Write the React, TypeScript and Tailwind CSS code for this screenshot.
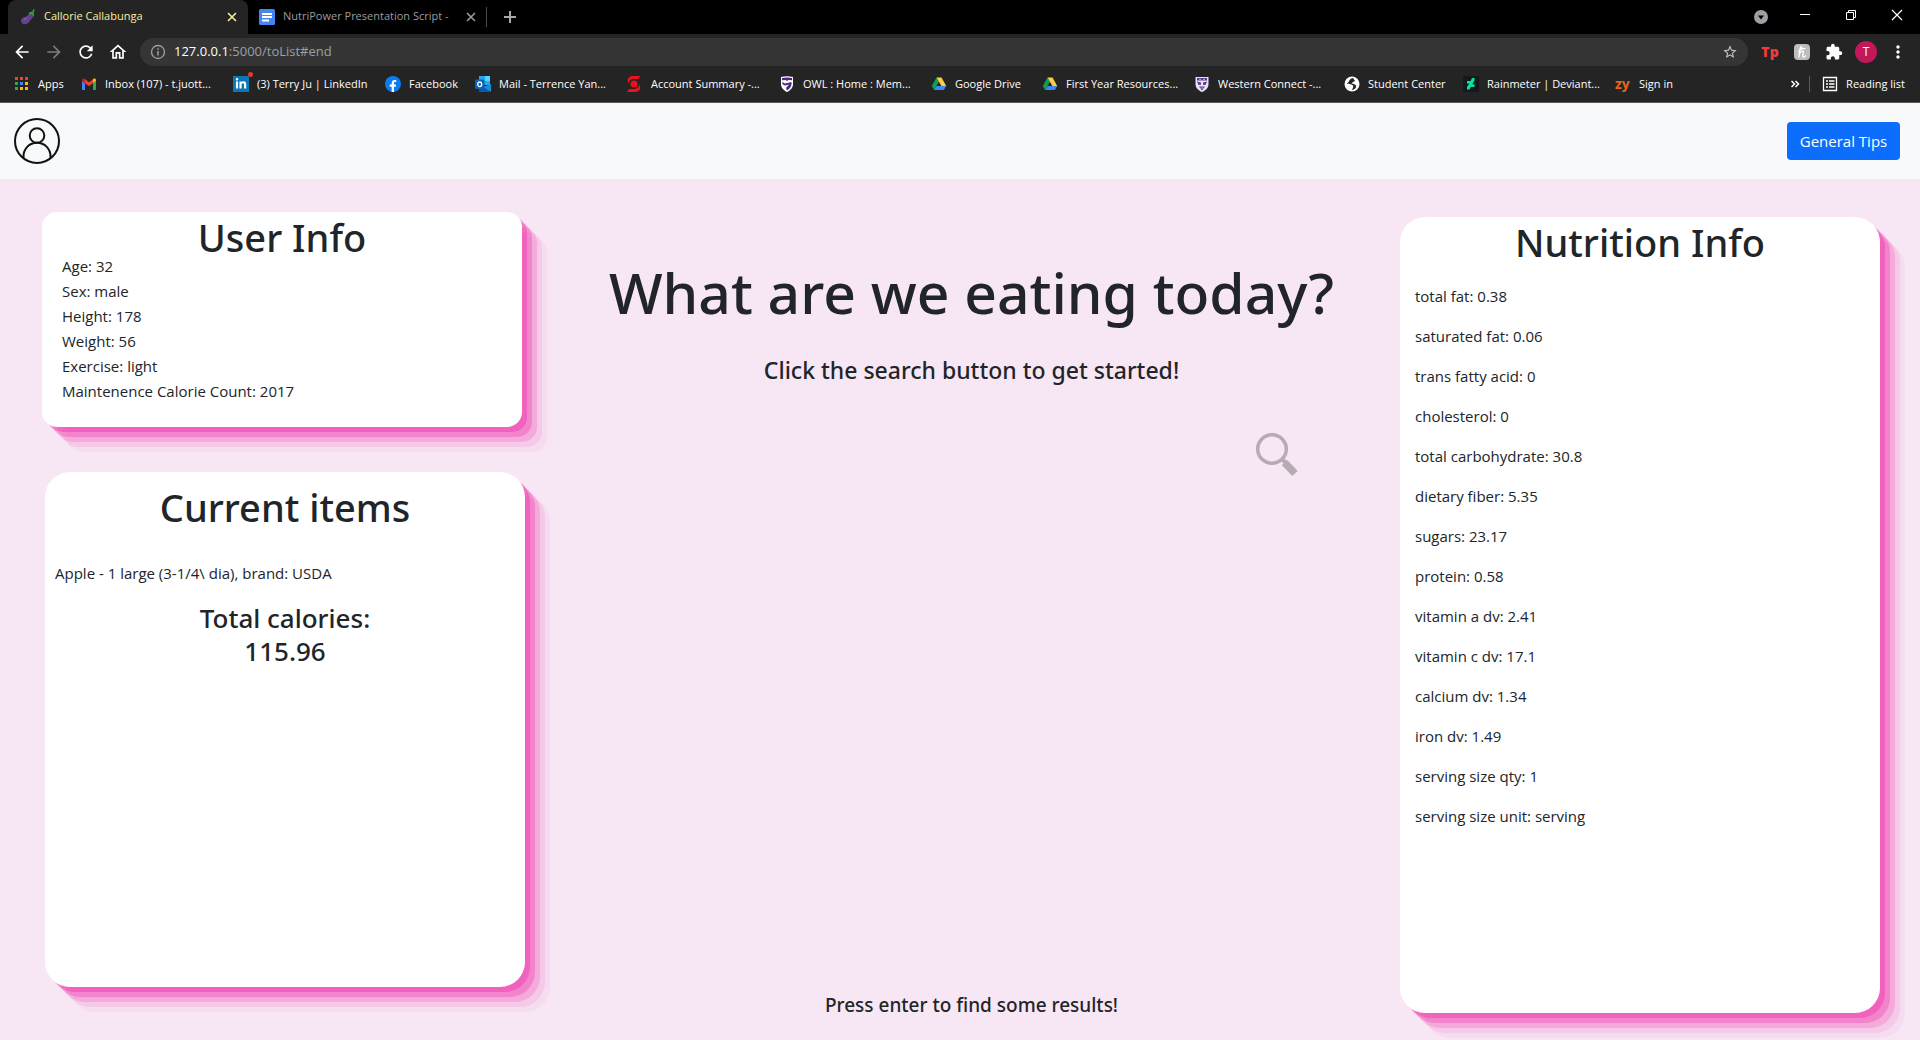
import React from 'react';
import { FaFacebookF, FaLinkedinIn } from 'react-icons/fa';
import { MdArrowBack, MdArrowForward, MdRefresh, MdOutlineHome, MdStarBorder, MdExtension, MdMoreVert } from 'react-icons/md';

const userInfo = [
  { label: 'Age', value: '32' },
  { label: 'Sex', value: 'male' },
  { label: 'Height', value: '178' },
  { label: 'Weight', value: '56' },
  { label: 'Exercise', value: 'light' },
  { label: 'Maintenence Calorie Count', value: '2017' },
];

const nutritionInfo = [
  { label: 'total fat', value: '0.38' },
  { label: 'saturated fat', value: '0.06' },
  { label: 'trans fatty acid', value: '0' },
  { label: 'cholesterol', value: '0' },
  { label: 'total carbohydrate', value: '30.8' },
  { label: 'dietary fiber', value: '5.35' },
  { label: 'sugars', value: '23.17' },
  { label: 'protein', value: '0.58' },
  { label: 'vitamin a dv', value: '2.41' },
  { label: 'vitamin c dv', value: '17.1' },
  { label: 'calcium dv', value: '1.34' },
  { label: 'iron dv', value: '1.49' },
  { label: 'serving size qty', value: '1' },
  { label: 'serving size unit', value: 'serving' },
];

const AppsIcon = () => (
  <svg viewBox="0 0 16 16" className="w-4 h-4 shrink-0">
    <path fill="#ea4335" d="M1 1h3v3H1zM6 1h3v3H6zM11 1h3v3h-3z" />
    <path fill="#34a853" d="M1 6h3v3H1z" />
    <path fill="#4285f4" d="M6 6h3v3H6z" />
    <path fill="#fbbc04" d="M11 6h3v3h-3zM6 11h3v3H6zM11 11h3v3h-3z" />
    <path fill="#34a853" d="M1 11h3v3H1z" />
  </svg>
);

const GmailIcon = () => (
  <svg viewBox="0 0 16 16" className="w-4 h-4 shrink-0">
    <path fill="#4285f4" d="M1 5v8c0 .6.4 1 1 1h2V7.200z" />
    <path fill="#34a853" d="M12 14h2c.6 0 1-.4 1-1V5l-3 2.200z" />
    <path fill="#fbbc04" d="M12 3.500v3.800l3-2.300V4c0-1.500-1.600-2-2.500-1.300z" />
    <path fill="#ea4335" d="M4 7.300V3.300l4 3 4-3v4l-4 3z" />
    <path fill="#c5221f" d="M1 4v1l3 2.300V3.300l-.6-.5C2.400 2 1 2.700 1 4z" />
  </svg>
);

const LinkedInIcon = () => (
  <span className="relative flex items-center justify-center w-4 h-4 shrink-0 bg-[#0a78b8]">
    <FaLinkedinIn className="w-3 h-3 text-white" />
    <span className="absolute -top-1 -right-1 w-[5px] h-[5px] rounded-full bg-[#e8372c]" />
  </span>
);

const FacebookIcon = () => (
  <span className="flex items-end justify-center w-4 h-4 shrink-0 rounded-full bg-[#0b7cf0]">
    <FaFacebookF className="w-3 h-3 text-white" />
  </span>
);

const OutlookIcon = () => (
  <svg viewBox="0 0 16 16" className="w-4 h-4 shrink-0">
    <path fill="#28a8ea" d="M4 0h11v9H4z" />
    <path fill="#50d9ff" d="M10 0h5v5h-5z" />
    <path fill="#0f5aa8" d="M4 8l6 3 6-3v7c0 .6-.4 1-1 1H5c-.6 0-1-.4-1-1z" />
    <path fill="#1490df" d="M16 8v7.500L8 11z" />
    <rect fill="#0a63b8" y="3.500" width="9.500" height="9.500" rx=".8" />
    <ellipse cx="4.700" cy="8.300" rx="2" ry="2.300" fill="none" stroke="#fff" strokeWidth="1.300" />
  </svg>
);

const ScotiaIcon = () => (
  <svg viewBox="0 0 16 16" className="w-4 h-4 shrink-0" fill="#ec111a">
    <circle cx="7" cy="8" r="3.500" />
    <path d="M13.500 0H6C2.500 0 .5 2.300.8 5l.7 3C2 4.800 4 3 7 3h4.500zM0 16h8c3.500 0 5.500-2.300 5.200-5l-.7-3c-.5 3.200-2.500 5-5.500 5H2z" />
  </svg>
);

const OwlIcon = () => (
  <svg viewBox="0 0 16 16" className="w-4 h-4 shrink-0">
    <path fill="#fff" d="M2 1c4-1 8-1 12 0v7c0 4-3 6.500-6 8-3-1.500-6-4-6-8z" />
    <path fill="#4f2683" d="M3 2c3.500-.8 6.500-.8 10 0v2.200L9.500 4 8 5 6.500 4 3 4.200zM3 6l3 1.500L12.500 6c.5 4-1.500 6.500-4.500 8.500L7 12l3-3.500-3.500 1C5 9.500 3 8.500 3 6z" />
  </svg>
);

const DriveIcon = () => (
  <svg viewBox="0 0 16 16" className="w-4 h-4 shrink-0">
    <path fill="#0f9d58" d="M5.500 1.500L.8 10l2.400 4L8 5.700z" />
    <path fill="#ffcd40" d="M5.500 1.500h5L15.200 10h-4.800z" />
    <path fill="#4285f4" d="M5.600 10h9.600l-2.300 4H3.200z" />
  </svg>
);

const WesternIcon = () => (
  <svg viewBox="0 0 16 16" className="w-4 h-4 shrink-0">
    <path fill="#e9e2f3" d="M1.500 1h13v7c0 4-3 6.500-6.500 8-3.500-1.500-6.500-4-6.500-8z" />
    <path fill="#5b3592" d="M3 2h10v2.500H3zM3 5.500l4 1v2.300L4.500 9zM13 5.500l-4 1v2.300l2.500.2zM5 10.500h6L8 14.500z" />
    <path stroke="#e9e2f3" strokeWidth=".7" d="M5 3.300h2M9 3.300h2M6.500 12h3" />
  </svg>
);

const GlobeIcon = () => (
  <svg viewBox="0 0 16 16" className="w-4 h-4 shrink-0">
    <circle cx="8" cy="8" r="7.500" fill="#fff" />
    <path fill="#242424" d="M9 2C6.500 2.500 5 4 5 5.500L3 7.500c1 .8 3.500.4 4.500 1 1.300.8 2.500 1.500 1.500 3L8 14c3.500-.5 4.500-3 4-4.500L10 8 7.500 7.500 9 6l2-1z" />
  </svg>
);

const DeviantIcon = () => (
  <svg viewBox="0 0 16 16" className="w-4 h-4 shrink-0">
    <path fill="#131a1f" d="M0 0h16v16H0z" />
    <path fill="#06e59b" d="M11.500 2v2.500L9.300 8.300h2.200v2.700H7.800l-1.300 2.500H4V11l2.200-3.500H4V5h3.700L9 2z" />
  </svg>
);

const ZyIcon = () => <span className="w-4 shrink-0 text-sm leading-4 font-bold text-[#e8641b]">zy</span>;

const bookmarks = [
  { name: 'Apps', icon: AppsIcon, width: 'w-[67px]' },
  { name: 'Inbox (107) - t.juott...', icon: GmailIcon, width: 'w-[152px]' },
  { name: '(3) Terry Ju | LinkedIn', icon: LinkedInIcon, width: 'w-[152px]' },
  { name: 'Facebook', icon: FacebookIcon, width: 'w-[90px]' },
  { name: 'Mail - Terrence Yan...', icon: OutlookIcon, width: 'w-[152px]' },
  { name: 'Account Summary -...', icon: ScotiaIcon, width: 'w-[152px]' },
  { name: 'OWL : Home : Mem...', icon: OwlIcon, width: 'w-[152px]' },
  { name: 'Google Drive', icon: DriveIcon, width: 'w-[111px]' },
  { name: 'First Year Resources...', icon: DriveIcon, width: 'w-[152px]' },
  { name: 'Western Connect -...', icon: WesternIcon, width: 'w-[150px]' },
  { name: 'Student Center', icon: GlobeIcon, width: 'w-[119px]' },
  { name: 'Rainmeter | Deviant...', icon: DeviantIcon, width: 'w-[152px]' },
  { name: 'Sign in', icon: ZyIcon, width: 'w-[90px]' },
];

const TabStrip: React.FC = () => (
  <div className="flex items-end h-[34px] pl-2 bg-black text-[11px]">
    <div className="flex items-center w-[240px] h-[34px] pb-1 pl-3 pr-[10px] pt-[3px] rounded-t-lg bg-[#242424] text-[#f7ef9c]">
      <svg viewBox="0 0 16 16" className="w-4 h-4 mr-2 shrink-0">
        <path fill="#64418c" d="M11 4.500c2 1.500 2.500 3 1.500 4.500-1 1.400-2 1.500-3 3.500-1.300 2.500-4.500 3.500-6.700 2.300C.5 13.500.5 10.500 2.500 9c2-1.300 3.500-.8 5-2.500C8.500 5.500 9.500 4 11 4.500z" />
        <path fill="#8a63b5" d="M3.500 10c1.500-1 3-.7 4.500-2-.5 1.500-2.500 2-4 3.500z" />
        <path fill="#3b9a45" d="M8.500 5c.5-1.500 2-2.500 3.500-2L13.500 0l1.300.7-1.300 3c1 1.300.8 3-.3 4.300-.2-1.500-1-2.500-2-2.700-1 .2-1.800.2-2.700-.3z" />
      </svg>
      <span className="flex-1 whitespace-nowrap">Callorie Callabunga</span>
      <button type="button" aria-label="Close tab">
        <svg viewBox="0 0 12 12" className="w-3 h-3" stroke="currentColor" strokeWidth="1.600"><path d="M2 2l8 8M10 2l-8 8" /></svg>
      </button>
    </div>
    <div className="flex items-center w-[238px] h-[34px] pb-1 pl-[11px] pr-[9px] pt-[3px] text-[#989ba0]">
      <svg viewBox="0 0 16 16" className="w-4 h-4 mr-2 shrink-0">
        <rect width="16" height="16" rx="1.500" fill="#4285f4" />
        <path fill="#fff" d="M3 4h10v2H3zM3 7h10v2H3zM3 10.500h7v2H3z" />
      </svg>
      <span className="flex-1 whitespace-nowrap">NutriPower Presentation Script -</span>
      <button type="button" aria-label="Close tab">
        <svg viewBox="0 0 12 12" className="w-3 h-3" stroke="currentColor" strokeWidth="1.600"><path d="M2 2l8 8M10 2l-8 8" /></svg>
      </button>
    </div>
    <div className="flex items-center flex-1 h-[34px]">
      <span className="w-px h-5 bg-[#4a4a4a]" />
      <button type="button" aria-label="New tab" className="ml-4 text-[#a5a8ad]">
        <svg viewBox="0 0 14 14" className="w-[14px] h-[14px]" stroke="currentColor" strokeWidth="2"><path d="M7 1v12M1 7h12" /></svg>
      </button>
    </div>
    <div className="flex items-center h-[34px] pb-1 pr-[17px] text-white">
      <button type="button" aria-label="Search tabs" className="pt-1 mr-[31px]">
        <svg viewBox="0 0 14 14" className="w-[14px] h-[14px]"><circle cx="7" cy="7" r="7" fill="#9aa0a6" /><path fill="#000" d="M4 5.500h6L7 9.500z" /></svg>
      </button>
      <button type="button" aria-label="Minimize" className="mr-[34px]">
        <svg viewBox="0 0 12 12" className="w-3 h-3"><path fill="currentColor" d="M1 5h10v1H1z" /></svg>
      </button>
      <button type="button" aria-label="Restore" className="mr-[34px]">
        <svg viewBox="0 0 12 12" className="w-3 h-3" fill="none" stroke="currentColor"><path d="M1.500 3.500h7v7h-7zM3.500 3.500v-2h7v7h-2" /></svg>
      </button>
      <button type="button" aria-label="Close">
        <svg viewBox="0 0 12 12" className="w-3 h-3" stroke="currentColor" strokeWidth="1.200"><path d="M1 1l10 10M11 1L1 11" /></svg>
      </button>
    </div>
  </div>
);

const Toolbar: React.FC = () => (
  <div className="flex items-center h-9 pl-3 pr-[6px] text-white">
    <div className="flex items-center gap-3">
      <button type="button" aria-label="Back"><MdArrowBack className="w-5 h-5" /></button>
      <button type="button" aria-label="Forward"><MdArrowForward className="w-5 h-5 text-[#7b7b7b]" /></button>
      <button type="button" aria-label="Reload"><MdRefresh className="w-5 h-5" /></button>
      <button type="button" aria-label="Home"><MdOutlineHome className="w-5 h-5" /></button>
    </div>
    <div className="flex items-center flex-1 h-7 ml-3 px-[10px] rounded-full bg-[#353535]">
      <svg viewBox="0 0 16 16" className="w-4 h-4 mr-2" fill="none" stroke="#9aa0a6" strokeWidth="1.300">
        <circle cx="8" cy="8" r="6.500" />
        <path d="M8 7v4.500M8 4.300v1.400" strokeWidth="1.500" />
      </svg>
      <span className="flex-1 text-[13px] text-[#9aa0a6]"><span className="text-white">127.0.0.1</span>:5000/toList#end</span>
      <button type="button" aria-label="Bookmark this page"><MdStarBorder className="w-4 h-4 text-[#c4c7c5]" /></button>
    </div>
    <div className="grid grid-cols-5 items-center justify-items-center w-40 ml-[6px]">
      <span className="text-sm leading-4 font-extrabold text-[#f23b3b]">Tp</span>
      <span className="w-4 h-4 rounded-sm bg-[#bdbdbd] text-white">
        <svg viewBox="0 0 16 16" className="w-4 h-4" fill="none" stroke="currentColor" strokeWidth="1.300" strokeLinecap="round">
          <path d="M4.500 7C7 6 8.500 3.500 7.500 2.700S5.500 6 5 13M5 10.500C6 8 8.500 6.500 9.300 7.500s-1 3-.5 4.700 2 .8 2.700-.5M8 5l3-.7" />
        </svg>
      </span>
      <button type="button" aria-label="Extensions"><MdExtension className="w-[18px] h-[18px]" /></button>
      <button type="button" className="w-[22px] h-[22px] rounded-full bg-[#c2185b] text-xs">T</button>
      <button type="button" aria-label="Menu"><MdMoreVert className="w-5 h-5" /></button>
    </div>
  </div>
);

const BookmarksBar: React.FC = () => (
  <div className="flex items-center h-[33px] pl-[14px] pr-[15px] pb-1 text-[11px] text-white border-b border-[#5a5a5a]">
    {bookmarks.map(({ name, icon: Icon, width }) => (
      <a key={name} href="#bookmark" className={`flex items-center gap-2 shrink-0 whitespace-nowrap ${width}`}>
        <Icon />
        {name}
      </a>
    ))}
    <div className="flex items-center ml-auto">
      <button type="button" aria-label="More bookmarks">
        <svg viewBox="0 0 10 10" className="w-[10px] h-[10px]" fill="none" stroke="currentColor" strokeWidth="1.500"><path d="M1.500 2l3 3-3 3M5.500 2l3 3-3 3" /></svg>
      </button>
      <span className="w-px h-4 ml-[9px] mr-3 bg-[#5a5a5a]" />
      <button type="button" className="flex items-center gap-2 whitespace-nowrap">
        <svg viewBox="0 0 16 16" className="w-4 h-4" fill="none" stroke="currentColor" strokeWidth="1.300">
          <path d="M1.500 1.500h13v13h-13zM4 5h2M7 5h5.500M4 8h2M7 8h5.500M4 11h2M7 11h5.500" />
        </svg>
        Reading list
      </button>
    </div>
  </div>
);

const App: React.FC = () => {
  const shadow =
    'shadow-[5px_5px_0_rgba(240,46,170,0.4),10px_10px_0_rgba(240,46,170,0.3),15px_15px_0_rgba(240,46,170,0.2),20px_20px_0_rgba(240,46,170,0.1),25px_25px_0_rgba(240,46,170,0.05)]';
  const heading = "font-['Noto_Sans',sans-serif] font-medium text-center";

  return (
    <div className="flex flex-col min-h-screen bg-[#f7e6f4] font-['Open_Sans',sans-serif] text-[15px] text-[#212529]">
      {/* Browser */}
      <header className="bg-[#242424]">
        <TabStrip />
        <Toolbar />
        <BookmarksBar />
      </header>

      {/* Navbar */}
      <nav className="flex items-center justify-between h-[76px] pl-[14px] pr-5 bg-[#f8f9fa]">
        <a href="#profile" aria-label="Profile">
          <svg viewBox="0 0 46 46" className="w-[46px] h-[46px]" fill="none" stroke="#111" strokeWidth="2">
            <circle cx="23" cy="23" r="22" />
            <circle cx="23" cy="17.500" r="7.300" />
            <path d="M9.500 40v-1.500c0-8 6-13.700 13.500-13.700s13.500 5.700 13.500 13.700V40" />
          </svg>
        </a>
        <button type="button" className="w-[113px] h-[38px] rounded bg-[#0d6efd] text-white">General Tips</button>
      </nav>

      <main className="flex flex-1">
        <aside className="pt-[33px]">
          {/* User Info */}
          <section className={`w-[25vw] min-h-[215px] ml-[42px] px-5 pt-2 rounded-[15px] bg-white ${shadow}`}>
            <h1 className={`text-[38px] leading-[34px] ${heading}`}>User Info</h1>
            <ul className="leading-[25px]">
              {userInfo.map((item) => (
                <li key={item.label}>{item.label}: {item.value}</li>
              ))}
            </ul>
          </section>

          {/* Current items */}
          <section className={`w-[25vw] min-h-[515px] mt-[45px] ml-[45px] px-[10px] pt-[11px] rounded-[25px] bg-white ${shadow}`}>
            <h1 className={`text-[38px] leading-[48px] ${heading}`}>Current items</h1>
            <p className="mt-[30px] leading-6">Apple - 1 large (3-1/4\ dia), brand: USDA</p>
            <h3 className={`mt-[17px] text-[26px] leading-[33px] ${heading}`}>
              Total calories:
              <br />
              115.96
            </h3>
          </section>
        </aside>

        {/* Search */}
        <section className="flex flex-col flex-1 items-center pt-[77px] pb-[23px] pl-[18px]">
          <h1 className={`text-[57px] leading-[72px] ${heading}`}>What are we eating today?</h1>
          <h4 className={`mt-7 text-[23px] leading-[29px] ${heading}`}>Click the search button to get started!</h4>
          <form className="flex justify-end w-[652px] mt-12">
            <button type="button" aria-label="Search">
              <svg viewBox="0 0 42 44" className="w-[42px] h-11" fill="none" stroke="#b5abb3">
                <circle cx="16" cy="16" r="14.300" strokeWidth="3.500" />
                <path d="M26 26l3.500 3.500" strokeWidth="4" />
                <path d="M28.500 29.500l10.500 11" strokeWidth="7.500" />
              </svg>
            </button>
          </form>
          <h5 className={`mt-auto text-[19px] leading-6 ${heading}`}>Press enter to find some results!</h5>
        </section>

        {/* Nutrition Info */}
        <section className={`w-[25vw] min-h-[796px] mt-[38px] mb-[27px] mr-10 px-[15px] pt-px rounded-[25px] bg-white ${shadow}`}>
          <h1 className={`text-[38px] leading-[48px] ${heading}`}>Nutrition Info</h1>
          <ul className="flex flex-col gap-4 mt-[18px] leading-6">
            {nutritionInfo.map((item) => (
              <li key={item.label}>{item.label}: {item.value}</li>
            ))}
          </ul>
        </section>
      </main>
    </div>
  );
};

export default App;
